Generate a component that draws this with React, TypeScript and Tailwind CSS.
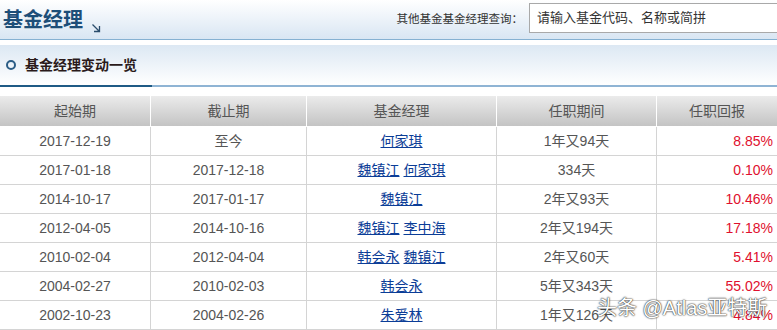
import React from 'react';

interface Row {
  start: string;
  end: string;
  managers: string[];
  span: string;
  ret: string;
}

const rows: Row[] = [
  { start: '2017-12-19', end: '至今', managers: ['何家琪'], span: '1年又94天', ret: '8.85%' },
  { start: '2017-01-18', end: '2017-12-18', managers: ['魏镇江', '何家琪'], span: '334天', ret: '0.10%' },
  { start: '2014-10-17', end: '2017-01-17', managers: ['魏镇江'], span: '2年又93天', ret: '10.46%' },
  { start: '2012-04-05', end: '2014-10-16', managers: ['魏镇江', '李中海'], span: '2年又194天', ret: '17.18%' },
  { start: '2010-02-04', end: '2012-04-04', managers: ['韩会永', '魏镇江'], span: '2年又60天', ret: '5.41%' },
  { start: '2004-02-27', end: '2010-02-03', managers: ['韩会永'], span: '5年又343天', ret: '55.02%' },
  { start: '2002-10-23', end: '2004-02-26', managers: ['朱爱林'], span: '1年又126天', ret: '4.84%' },
];

const font = "font-['Liberation_Sans','Noto_Sans_CJK_SC',sans-serif]";

export default function App() {
  return (
    <div className={`relative w-[777px] h-[330px] overflow-hidden bg-white ${font}`}>
      {/* page header */}
      <div className="h-[40px] flex items-center bg-gradient-to-b from-white to-[#d9e6f3] border-b border-[#86b1d2]">
        <div className="flex items-end pl-[3px]">
          <span className="text-[20px] font-bold text-[#1d4e78] leading-none">基金经理</span>
          <svg width="10" height="10" viewBox="0 0 10 10" className="ml-[8px] mb-[-3px]">
            <path d="M1.5 1.5 L8 8 M3 8.5 H8.5 V3" stroke="#2a4c6c" strokeWidth="1.3" fill="none" />
          </svg>
        </div>
        <div className="ml-auto mr-[-12px] flex items-center shrink-0">
          <span className="text-[11.5px] text-[#333] mr-[6px] whitespace-nowrap">其他基金基金经理查询：</span>
          <div className="w-[260px] h-[30px] mt-[-3px] border border-[#a9a9a9] bg-white flex items-center pl-[7px] text-[13px] text-[#333]">
            请输入基金代码、名称或简拼
          </div>
        </div>
      </div>

      {/* section title */}
      <div className="mt-[5px] h-[40px] flex items-center bg-gradient-to-b from-[#dce8f3] to-white">
        <span className="ml-[6px] w-[10px] h-[10px] rounded-full border-2 border-[#2b5d86]" />
        <span className="ml-[9px] text-[14px] font-bold text-[#2a1a1a]">基金经理变动一览</span>
      </div>
      <div className="flex h-[2px]">
        <div className="w-[152px] bg-[#1f5a85]" />
        <div className="flex-1 bg-[#8fb4d4]" />
      </div>

      {/* table */}
      <div className="mt-[9px] text-[14px] text-[#555]">
        <div className="grid grid-cols-[151px_156px_190px_160px_120px] h-[31px] bg-gradient-to-b from-[#ebebeb] to-[#c4c4c4] border-b border-white">
          {['起始期', '截止期', '基金经理', '任职期间', '任职回报'].map((h, i) => (
            <div key={h} className={`flex items-center justify-center ${i < 4 ? 'border-r border-white' : ''}`}>
              {h}
            </div>
          ))}
        </div>
        {rows.map((r) => (
          <div key={r.start} className="grid grid-cols-[151px_156px_190px_160px_120px] h-[29px] border-b border-[#d4d4d4]">
            <div className="flex items-center justify-center border-r border-[#d4d4d4]">{r.start}</div>
            <div className="flex items-center justify-center border-r border-[#d4d4d4]">{r.end}</div>
            <div className="flex items-center justify-center gap-[4px] border-r border-[#d4d4d4]">
              {r.managers.map((m) => (
                <a key={m} href="#" className="text-[#0b3d97] underline">
                  {m}
                </a>
              ))}
            </div>
            <div className="flex items-center justify-center border-r border-[#d4d4d4]">{r.span}</div>
            <div className="flex items-center justify-end pr-[4px] text-[#e0102e]">{r.ret}</div>
          </div>
        ))}
      </div>

      {/* watermark */}
      <div className="absolute left-[597px] top-[298px] text-[20px] text-white [text-shadow:0_0_2px_#333,0_0_1px_#000] leading-none">
        头条 @Atlas亚特斯
      </div>
    </div>
  );
}
